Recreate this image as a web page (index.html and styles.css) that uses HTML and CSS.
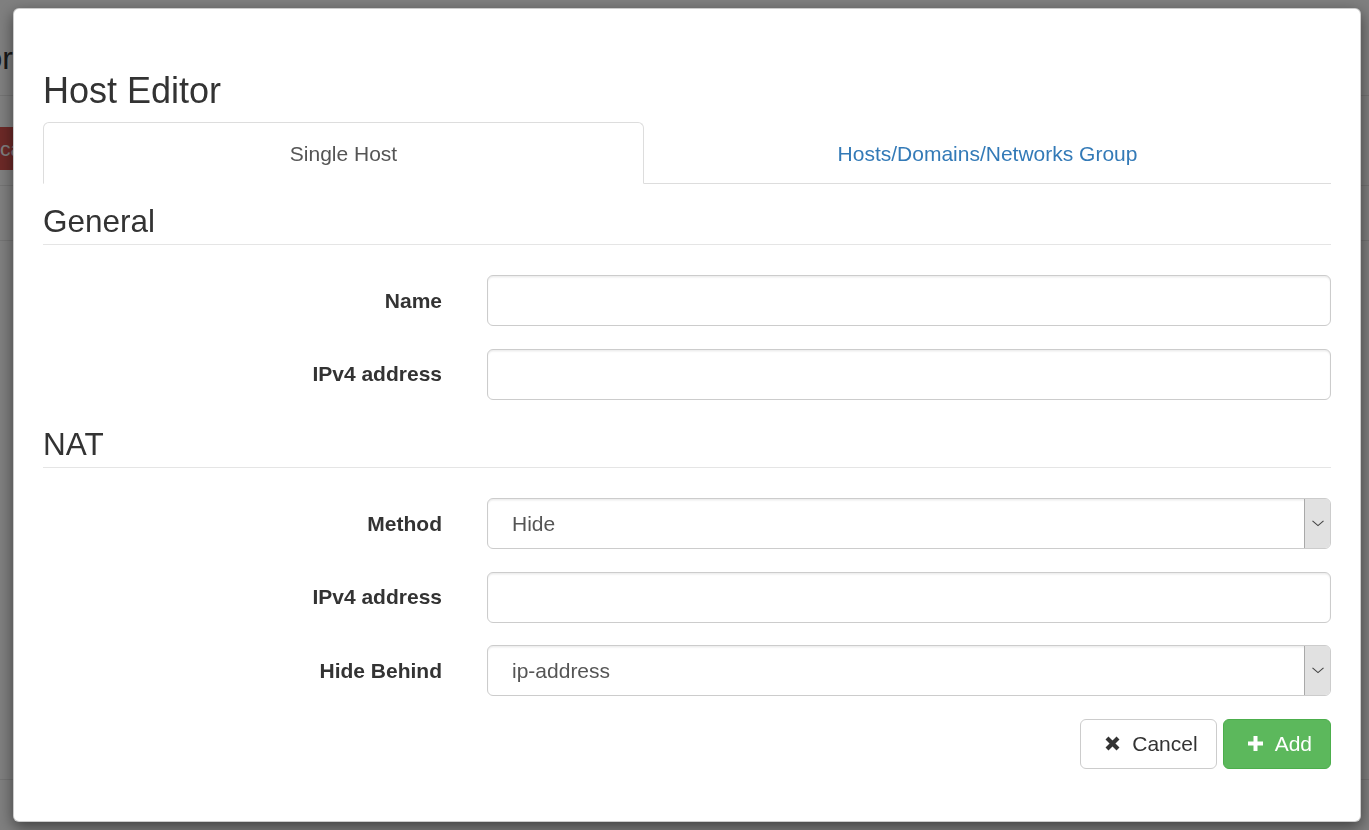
FILE: index.html
```html
<!DOCTYPE html>
<html lang="en">
<head>
<meta charset="utf-8">
<title>Host Editor</title>
<link rel="stylesheet" href="styles.css">
</head>
<body>
<div class="page">
  <header class="page-header">
    <div class="bg-title"><span>Host Editor</span></div>
  </header>
  <div class="toolbar"><span class="bg-btn">cancel</span></div>
  <div class="bg-row"></div>
  <div class="bg-table"></div>
</div>

<div class="backdrop"></div>

<div class="modal">
  <h3 class="modal-title">Host Editor</h3>
  <ul class="tabs">
    <li class="tab active">Single Host</li>
    <li class="tab link">Hosts/Domains/Networks Group</li>
  </ul>
  <div class="tab-content">
    <div class="legend">General</div>
    <div class="form-group">
      <label class="label">Name</label>
      <input class="control" type="text">
    </div>
    <div class="form-group">
      <label class="label">IPv4 address</label>
      <input class="control" type="text">
    </div>

    <div class="legend">NAT</div>
    <div class="form-group">
      <label class="label">Method</label>
      <div class="control select">
        <span class="select-value">Hide</span>
        <span class="select-arrow"><svg width="12" height="7" viewBox="0 0 12 7"><path d="M0.5 0.8 L6 5.6 L11.5 0.8" fill="none" stroke="#444" stroke-width="1.1"/></svg></span>
      </div>
    </div>
    <div class="form-group">
      <label class="label">IPv4 address</label>
      <input class="control" type="text">
    </div>
    <div class="form-group">
      <label class="label">Hide Behind</label>
      <div class="control select">
        <span class="select-value">ip-address</span>
        <span class="select-arrow"><svg width="12" height="7" viewBox="0 0 12 7"><path d="M0.5 0.8 L6 5.6 L11.5 0.8" fill="none" stroke="#444" stroke-width="1.1"/></svg></span>
      </div>
    </div>

    <div class="footer">
      <button class="btn btn-default" type="button">
        <span class="icon"><svg width="15" height="15" viewBox="0 0 15 15"><path d="M2 2 L13 13 M13 2 L2 13" stroke="#333" stroke-width="4.2" stroke-linecap="butt"/></svg></span>Cancel
      </button>
      <button class="btn btn-success" type="button">
        <span class="icon"><svg width="15" height="15" viewBox="0 0 15 15"><path d="M5.5 0 H9.5 V5.5 H15 V9.5 H9.5 V15 H5.5 V9.5 H0 V5.5 H5.5 Z" fill="#fff"/></svg></span>Add
      </button>
    </div>
  </div>
</div>
</body>
</html>
```

FILE: styles.css
```css
html, body {
  margin: 0;
  padding: 0;
  background: #fff;
  font-family: "Liberation Sans", Arial, Helvetica, sans-serif;
  font-size: 21px;
  color: #333;
}

/* ---------- background page (behind the backdrop) ---------- */
.page {
  width: 1369px;
  height: 830px;
  overflow: hidden;
}
.page-header {
  box-sizing: border-box;
  height: 96px;
  padding-top: 38px;
  border-bottom: 1px solid #e8e8e8;
}
.bg-title {
  width: 13px;
  overflow: hidden;
  display: flex;
  justify-content: flex-end;
  white-space: nowrap;
  font-size: 32px;
  line-height: 40px;
  color: #333;
}
.toolbar {
  box-sizing: border-box;
  height: 90px;
  padding-top: 31px;
  border-bottom: 1px solid #e8e8e8;
}
.bg-btn {
  display: inline-block;
  height: 43px;
  line-height: 43px;
  padding: 0 20px 0 0;
  background: #d9534f;
  color: #fff;
  font-size: 21px;
  border-radius: 0 6px 6px 0;
}
.bg-row {
  height: 54px;
  border-bottom: 1px solid #e8e8e8;
}
.bg-table {
  height: 538px;
  border-bottom: 1px solid #e8e8e8;
}

.backdrop {
  position: fixed;
  inset: 0;
  background: rgba(0, 0, 0, 0.5);
}

/* ---------- modal ---------- */
.modal {
  position: fixed;
  top: 8px;
  left: 13px;
  width: 1348px;
  box-sizing: border-box;
  padding: 0 29px 52px 29px;
  background: #fff;
  border: 1px solid rgba(0, 0, 0, 0.2);
  border-radius: 6px;
  box-shadow: 0 5px 15px rgba(0, 0, 0, 0.5);
}
.modal-title {
  margin: 62px 0 11px 0;
  font-size: 36px;
  line-height: 40px;
  font-weight: 400;
  color: #333;
}

.tabs {
  display: flex;
  list-style: none;
  margin: 0;
  padding: 0;
  border-bottom: 1px solid #ddd;
}
.tab {
  box-sizing: border-box;
  margin-bottom: -1px;
  padding: 16px 0 14px 0;
  line-height: 30px;
  text-align: center;
  border: 1px solid transparent;
  border-radius: 6px 6px 0 0;
}
.tab.active {
  width: 601px;
  color: #555;
  background: #fff;
  border-color: #ddd;
  border-bottom-color: #fff;
}
.tab.link {
  flex: 1;
  color: #337ab7;
}

.tab-content {
  padding-top: 15px;
}
.legend {
  font-size: 31.5px;
  line-height: 45px;
  color: #333;
  border-bottom: 1px solid #e5e5e5;
  margin-bottom: 30px;
}

.form-group {
  display: grid;
  grid-template-columns: 399px 1fr;
  column-gap: 45px;
  align-items: center;
  margin-bottom: 22.5px;
}
.label {
  text-align: right;
  font-weight: 700;
  color: #333;
}
.control {
  box-sizing: border-box;
  display: block;
  width: 100%;
  height: 51px;
  margin: 0;
  padding: 9px 18px;
  font-family: inherit;
  font-size: 21px;
  color: #555;
  background: #fff;
  border: 1px solid #ccc;
  border-radius: 6px;
  box-shadow: inset 0 1.5px 1.5px rgba(0, 0, 0, 0.075);
  outline: none;
}
.select {
  display: flex;
  align-items: stretch;
  padding: 0;
  overflow: hidden;
}
.select-value {
  flex: 1;
  display: flex;
  align-items: center;
  padding-left: 24px;
  color: #555;
}
.select-arrow {
  width: 25px;
  display: flex;
  align-items: center;
  justify-content: center;
  background: #e1e1e1;
  border-left: 1px solid #a9a9a9;
}

.footer {
  display: flex;
  justify-content: flex-end;
  gap: 6px;
}
.btn {
  display: inline-flex;
  align-items: center;
  height: 50px;
  box-sizing: border-box;
  padding: 0 18px;
  font-family: inherit;
  font-size: 21px;
  line-height: 30px;
  border: 1px solid transparent;
  border-radius: 6px;
  cursor: pointer;
}
.btn .icon {
  display: inline-flex;
  justify-content: flex-end;
  width: 21px;
  margin-right: 12px;
  margin-top: -1px;
}
.btn-default {
  color: #333;
  background: #fff;
  border-color: #ccc;
}
.btn-success {
  color: #fff;
  background: #5cb85c;
  border-color: #4cae4c;
}
```
